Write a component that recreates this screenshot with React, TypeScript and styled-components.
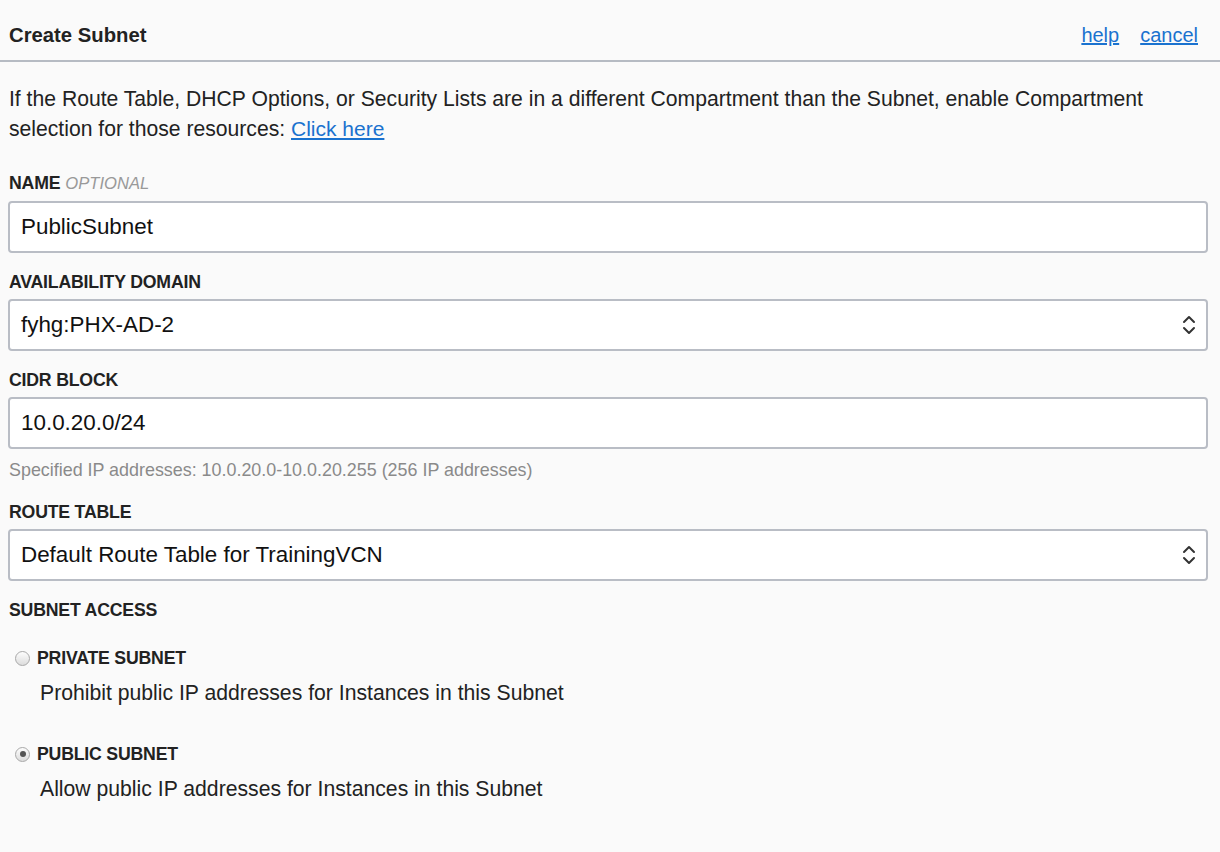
import React from 'react'
import styled, { createGlobalStyle } from 'styled-components'

const GlobalStyle = createGlobalStyle`
  body {
    margin: 0;
    background: #fafafa;
    font-family: "Liberation Sans", Arial, sans-serif;
    color: #222;
  }
`

const Page = styled.div`
  width: 1220px;
  min-height: 852px;
  background: #fafafa;
`

const Header = styled.div`
  height: 62px;
  box-sizing: border-box;
  padding: 10px 22px 0 9px;
  display: flex;
  align-items: center;
  justify-content: space-between;
  border-bottom: 2px solid #b6bbc3;
`

const Title = styled.h1`
  margin: 0;
  font-size: 20.3px;
  font-weight: bold;
  color: #222;
`

const Links = styled.div`
  display: flex;
  gap: 21px;
`

const Link = styled.a<{ $size?: number }>`
  color: #1a72cf;
  text-decoration: underline;
  font-size: ${p => p.$size ?? 20}px;
  cursor: pointer;
`

const Body = styled.div`
  padding: 0 12px 0 8px;
`

const Intro = styled.p`
  margin: 22px 0 0 1px;
  font-size: 21.15px;
  line-height: 30px;
  color: #222;
`

const Label = styled.div<{ $gap: number }>`
  margin: ${p => p.$gap}px 0 0 1px;
  font-size: 17.7px;
  line-height: 20px;
  font-weight: bold;
  color: #222;
  letter-spacing: -0.2px;
`

const Optional = styled.span`
  font-weight: normal;
  font-style: italic;
  color: #999;
  font-size: 16.6px;
  margin-left: 5px;
  letter-spacing: 0;
`

const Field = styled.div`
  margin-top: 7px;
  height: 52px;
  box-sizing: border-box;
  border: 2px solid #b9bdc5;
  border-radius: 4px;
  background: #fff;
  display: flex;
  align-items: center;
  justify-content: space-between;
  padding: 0 9px 0 11px;
  font-size: 22.4px;
  color: #111;
`

const Hint = styled.div`
  margin: 11px 0 0 1px;
  font-size: 17.9px;
  line-height: 20px;
  color: #8a8a8a;
`

const RadioRow = styled.div<{ $gap: number }>`
  margin-top: ${p => p.$gap}px;
  display: flex;
  align-items: center;
  gap: 7px;
  padding-left: 7px;
  font-size: 17.7px;
  font-weight: bold;
  line-height: 20px;
  letter-spacing: -0.2px;
`

const Radio = styled.span<{ $checked?: boolean }>`
  width: 15px;
  height: 15px;
  box-sizing: border-box;
  border-radius: 50%;
  border: 1px solid #a8a8a8;
  background: linear-gradient(#fdfdfd, #dcdcdc);
  display: flex;
  align-items: center;
  justify-content: center;
  &::after {
    content: '';
    display: ${p => (p.$checked ? 'block' : 'none')};
    width: 6px;
    height: 6px;
    border-radius: 50%;
    background: #555;
  }
`

const Desc = styled.div`
  margin: 13px 0 0 32px;
  font-size: 21.2px;
  line-height: 24px;
  color: #222;
`

const Arrows = () => (
  <svg width="16" height="22" viewBox="0 0 16 22" aria-hidden="true">
    <path d="M3 8 L8 3 L13 8" fill="none" stroke="#333" strokeWidth="2" strokeLinecap="round" strokeLinejoin="round" />
    <path d="M3 14 L8 19 L13 14" fill="none" stroke="#333" strokeWidth="2" strokeLinecap="round" strokeLinejoin="round" />
  </svg>
)

export default function App() {
  return (
    <Page>
      <GlobalStyle />
      <Header>
        <Title>Create Subnet</Title>
        <Links>
          <Link>help</Link>
          <Link>cancel</Link>
        </Links>
      </Header>
      <Body>
        <Intro>
          If the Route Table, DHCP Options, or Security Lists are in a different Compartment than the Subnet, enable Compartment
          selection for those resources: <Link $size={21}>Click here</Link>
        </Intro>

        <Label $gap={29}>
          NAME<Optional>OPTIONAL</Optional>
        </Label>
        <Field>PublicSubnet</Field>

        <Label $gap={19}>AVAILABILITY DOMAIN</Label>
        <Field>
          fyhg:PHX-AD-2
          <Arrows />
        </Field>

        <Label $gap={19}>CIDR BLOCK</Label>
        <Field>10.0.20.0/24</Field>
        <Hint>Specified IP addresses: 10.0.20.0-10.0.20.255 (256 IP addresses)</Hint>

        <Label $gap={22}>ROUTE TABLE</Label>
        <Field>
          Default Route Table for TrainingVCN
          <Arrows />
        </Field>

        <Label $gap={19}>SUBNET ACCESS</Label>

        <RadioRow $gap={28}>
          <Radio />
          PRIVATE SUBNET
        </RadioRow>
        <Desc>Prohibit public IP addresses for Instances in this Subnet</Desc>

        <RadioRow $gap={39}>
          <Radio $checked />
          PUBLIC SUBNET
        </RadioRow>
        <Desc>Allow public IP addresses for Instances in this Subnet</Desc>
      </Body>
    </Page>
  )
}
